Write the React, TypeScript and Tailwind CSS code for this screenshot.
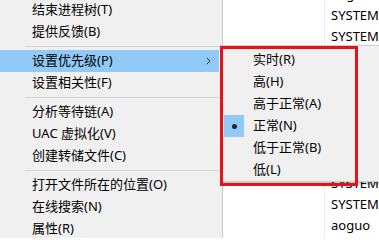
import React from 'react';

// --- DATA ---
type MenuEntry = { label: string; sep?: false; active?: boolean; sub?: boolean } | { sep: true };

const menu: MenuEntry[] = [
  { label: '结束进程树(T)' },
  { label: '提供反馈(B)' },
  { sep: true },
  { label: '设置优先级(P)', active: true, sub: true },
  { label: '设置相关性(F)' },
  { sep: true },
  { label: '分析等待链(A)' },
  { label: 'UAC 虚拟化(V)' },
  { label: '创建转储文件(C)' },
  { sep: true },
  { label: '打开文件所在的位置(O)' },
  { label: '在线搜索(N)' },
  { label: '属性(R)' },
];

const priorities = [
  { label: '实时(R)' },
  { label: '高(H)' },
  { label: '高于正常(A)' },
  { label: '正常(N)', checked: true },
  { label: '低于正常(B)' },
  { label: '低(L)' },
];

const users = ['aoguo', 'SYSTEM', 'SYSTEM', 'SYSTEM', 'SYSTEM', 'SYSTEM', 'SYSTEM', 'SYSTEM', 'SYSTEM', 'SYSTEM', 'SYSTEM', 'aoguo'];

const font = { fontFamily: '"Segoe UI", "Noto Sans", "Noto Sans CJK SC", sans-serif' };

const Chevron = () => (
  <svg width="5" height="8" viewBox="0 0 5 8" className="text-[#333]">
    <path d="M0.8 0.8 L4 4 L0.8 7.2" fill="none" stroke="currentColor" strokeWidth="1" />
  </svg>
);

export default function App() {
  return (
    <div
      className="relative w-[379px] h-[238px] overflow-hidden bg-white text-[13px] text-black"
      style={font}
    >
      {/* Task manager list behind */}
      <div className="flex h-full">
        <div className="w-[325px] shrink-0 border-r border-[#ebebeb]" />
        <div className="flex flex-col -mt-[16px] pl-[6px]">
          {users.map((u, i) => (
            <div key={i} className="h-[21px] leading-[21px] whitespace-nowrap">{u}</div>
          ))}
        </div>
      </div>

      {/* Context menu */}
      <div className="absolute left-0 top-0 w-[223px] h-full bg-[#f0f0f0] border-r border-[#c9c9c9]">
        <div className="flex flex-col -mt-[1px]">
          {menu.map((m, i) =>
            m.sep ? (
              <div key={i} className="h-[7px] flex items-center pl-[25px]">
                <div className="h-px w-full bg-[#d7d7d7]" />
              </div>
            ) : (
              <div
                key={i}
                className={`h-[22px] flex items-center pl-[32px] pr-[8px] mr-[3px] ${m.active ? 'bg-[#91c9f7]' : ''}`}
              >
                <span className="flex-1 whitespace-nowrap">{m.label}</span>
                {m.sub && <Chevron />}
              </div>
            )
          )}
        </div>
      </div>

      {/* Priority submenu */}
      <div className="absolute left-[220px] top-[45px] w-[175px] h-[137px] bg-[#f0f0f0] border border-[#cccccc] shadow-[2px_2px_3px_rgba(0,0,0,0.25)] pt-[3px] px-[3px]">
        {priorities.map((p, i) => (
          <div key={i} className="h-[22px] flex items-center">
            <div className={`w-[20px] h-[22px] flex items-center justify-center ${p.checked ? 'bg-[#91c9f7]' : ''}`}>
              {p.checked && <div className="w-[5px] h-[5px] rounded-full bg-[#222]" />}
            </div>
            <span className="pl-[9px] whitespace-nowrap">{p.label}</span>
          </div>
        ))}
      </div>

      {/* Annotation frame */}
      <div className="absolute left-[220px] top-[46px] w-[138px] h-[140px] border-[3px] border-[#e3121b]" />
    </div>
  );
}
